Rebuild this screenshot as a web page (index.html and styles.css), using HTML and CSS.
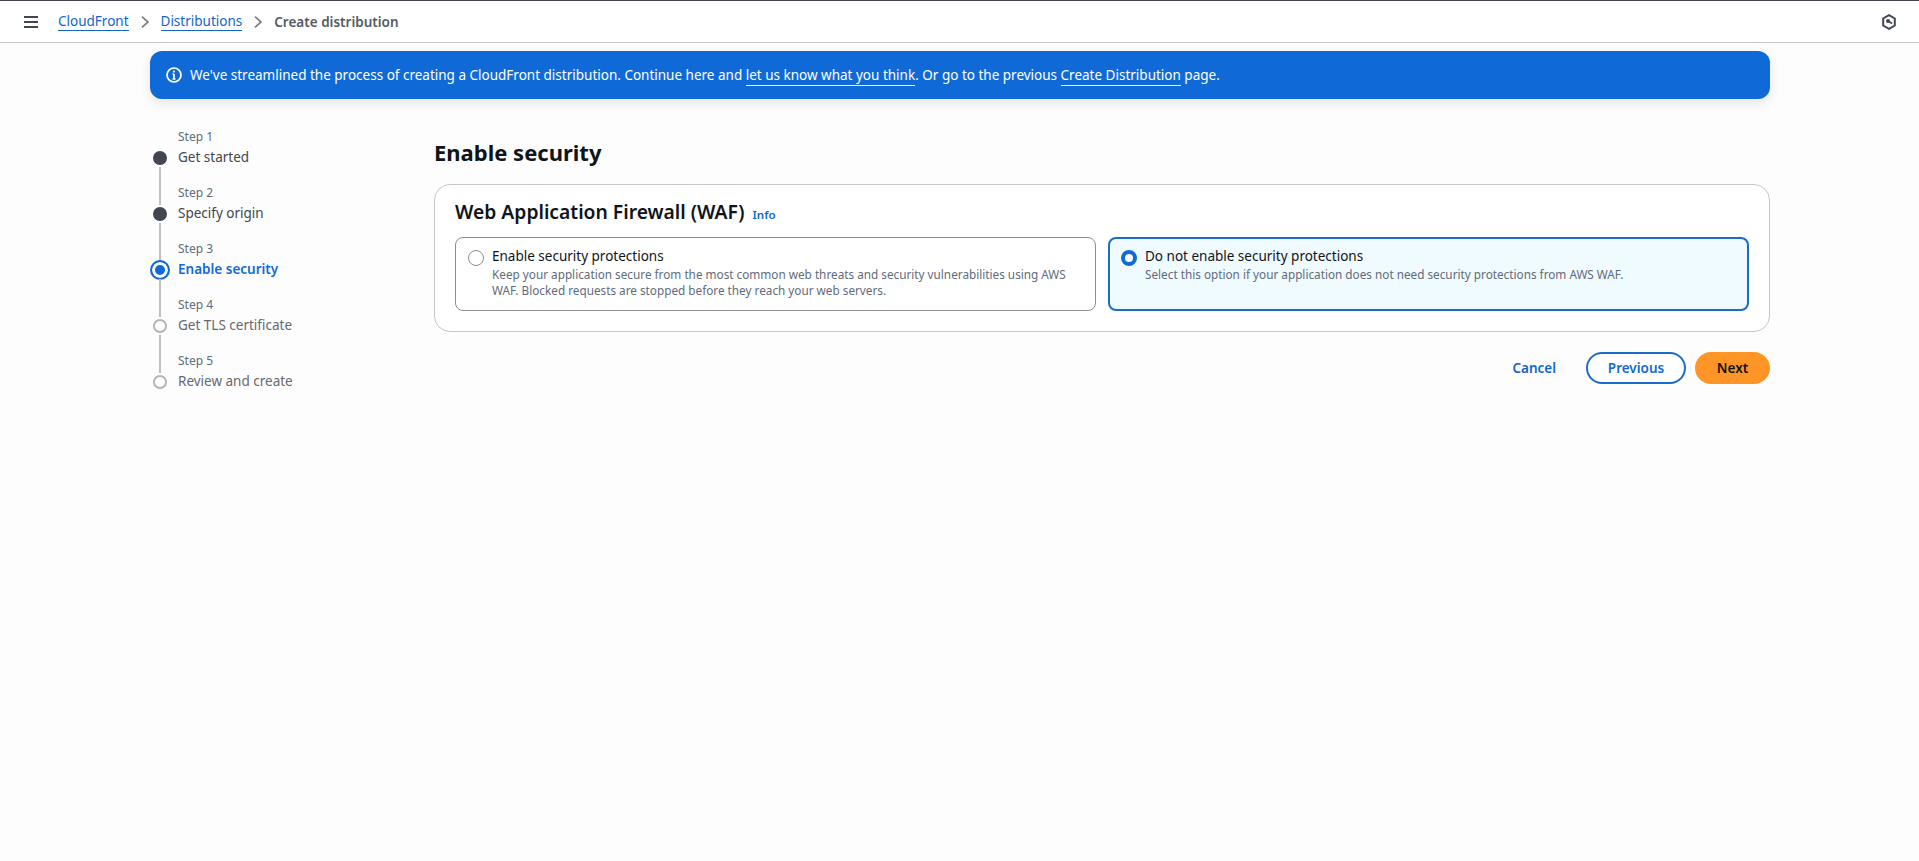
FILE: index.html
```html
<!DOCTYPE html>
<html lang="en">
<head>
<meta charset="utf-8">
<title>Create distribution | CloudFront</title>
<link rel="stylesheet" href="styles.css">
</head>
<body>
<header class="topbar">
  <button class="menu-btn" aria-label="Menu">
    <svg class="icon-menu" viewBox="0 0 14 12"><path d="M0 1h14M0 6h14M0 11h14"/></svg>
  </button>
  <nav class="crumbs">
    <a class="crumb-link" href="#">CloudFront</a>
    <svg class="crumb-sep" viewBox="0 0 8 12"><path d="M1 .7 7 6l-6 5.300"/></svg>
    <a class="crumb-link" href="#">Distributions</a>
    <svg class="crumb-sep" viewBox="0 0 8 12"><path d="M1 .7 7 6l-6 5.300"/></svg>
    <span class="crumb-current">Create distribution</span>
  </nav>
  <svg class="icon-hex" viewBox="0 0 16 16"><path class="hex-outline" d="M8 1.200 13.800 4.500v7L8 14.800 2.200 11.500v-7z"/><circle class="hex-dot" cx="7" cy="7" r="2"/><path class="hex-line" d="M7 7l4 2.500"/></svg>
</header>

<main class="page">
  <div class="banner">
    <svg class="icon-info" viewBox="0 0 16 16"><circle cx="8" cy="8" r="7"/><path d="M8 7v5M6.500 12h3M6.500 7H8"/><path d="M8 3.600v1.800"/></svg>
    <p class="banner-text">We've streamlined the process of creating a CloudFront distribution. Continue here and <a href="#">let us know what you think</a>. Or go to the previous <a href="#">Create Distribution</a> page.</p>
  </div>

  <div class="wizard">
    <ol class="steps">
      <li class="step step-first step-done">
        <div class="rail"><span class="line-top"></span><span class="dot"></span><span class="line-bottom"></span></div>
        <div class="step-text"><small>Step 1</small><strong>Get started</strong></div>
      </li>
      <li class="step step-done">
        <div class="rail"><span class="line-top"></span><span class="dot"></span><span class="line-bottom"></span></div>
        <div class="step-text"><small>Step 2</small><strong>Specify origin</strong></div>
      </li>
      <li class="step step-active">
        <div class="rail"><span class="line-top"></span><span class="dot"></span><span class="line-bottom"></span></div>
        <div class="step-text"><small>Step 3</small><strong>Enable security</strong></div>
      </li>
      <li class="step">
        <div class="rail"><span class="line-top"></span><span class="dot"></span><span class="line-bottom"></span></div>
        <div class="step-text"><small>Step 4</small><strong>Get TLS certificate</strong></div>
      </li>
      <li class="step step-last">
        <div class="rail"><span class="line-top"></span><span class="dot"></span><span class="line-bottom"></span></div>
        <div class="step-text"><small>Step 5</small><strong>Review and create</strong></div>
      </li>
    </ol>

    <section class="content">
      <h1 class="title">Enable security</h1>
      <div class="card">
        <div class="card-head">
          <h2>Web Application Firewall (WAF)</h2>
          <a class="info" href="#">Info</a>
        </div>
        <div class="options">
          <label class="option">
            <span class="radio"></span>
            <span class="option-text">
              <span class="option-title">Enable security protections</span>
              <span class="option-desc">Keep your application secure from the most common web threats and security vulnerabilities using AWS WAF. Blocked requests are stopped before they reach your web servers.</span>
            </span>
          </label>
          <label class="option option-selected">
            <span class="radio"></span>
            <span class="option-text">
              <span class="option-title">Do not enable security protections</span>
              <span class="option-desc">Select this option if your application does not need security protections from AWS WAF.</span>
            </span>
          </label>
        </div>
      </div>
      <div class="actions">
        <a class="btn-link" href="#">Cancel</a>
        <button class="btn btn-normal">Previous</button>
        <button class="btn btn-primary">Next</button>
      </div>
    </section>
  </div>
</main>
</body>
</html>
```

FILE: styles.css
```css
* { box-sizing: border-box; }
html, body { height: 100%; }
body {
  margin: 0;
  background: #fdfdfd;
  color: #0f141a;
  font-family: "Noto Sans", "Open Sans", sans-serif;
  font-size: 13.5px;
  line-height: 20px;
}
a { color: #1066cc; }

.topbar {
  height: 43px;
  display: flex;
  align-items: center;
  padding-left: 24px;
  padding-right: 22px;
  background: #fff;
  border-top: 1px solid #424650;
  border-bottom: 1px solid #c6c6cd;
}
.menu-btn { display: flex; padding: 0; border: 0; background: none; }
.icon-menu { width: 14px; height: 12px; fill: none; stroke: #424650; stroke-width: 2; }
.crumbs { display: flex; align-items: center; margin-left: 20px; flex: 1; }
.crumb-link { text-decoration: none; border-bottom: 1px solid #1066cc; line-height: 17px; margin-top: 1px; }
.crumb-sep { width: 8px; height: 12px; margin: 0 12px; fill: none; stroke: #7d8088; stroke-width: 1.800; }
.crumb-current { font-weight: 600; color: #545b64; }
.icon-hex { width: 16px; height: 16px; }
.hex-outline { fill: none; stroke: #424650; stroke-width: 2; }
.hex-dot { fill: #424650; }
.hex-line { stroke: #424650; stroke-width: 1.800; fill: none; }

.page { padding: 8px 149px 0 150px; }

.banner {
  height: 48px;
  display: flex;
  align-items: center;
  gap: 8px;
  padding-left: 16px;
  background: #0f6ad8;
  color: #fff;
  border-radius: 12px;
  box-shadow: 0 4px 12px rgba(0, 7, 22, 0.1);
}
.icon-info { width: 16px; height: 16px; fill: none; stroke: #fff; stroke-width: 1.700; flex: none; }
.banner-text { margin: 0; }
.banner-text a { color: #fff; text-decoration: none; border-bottom: 1px solid #fff; padding-bottom: 1px; }

.wizard { display: flex; margin-top: 30px; }
.steps { list-style: none; margin: 0; padding: 0; width: 284px; flex: none; }
.step { display: flex; gap: 8px; height: 56px; }
.rail { width: 20px; display: flex; flex-direction: column; align-items: center; }
.line-top { width: 2px; height: 20px; background: #c0c0c6; flex: none; }
.line-bottom { width: 2px; flex: 1; background: #c0c0c6; }
.dot {
  width: 14px;
  height: 14px;
  margin: 2px 0;
  border-radius: 50%;
  border: 2px solid #b4b4bb;
  background: #fff;
  flex: none;
}
.step-first .line-top { visibility: hidden; }
.step-last .line-bottom { visibility: hidden; }
.step-done .dot { background: #424650; border-color: #424650; }
.step-active .dot {
  width: 20px;
  height: 20px;
  margin: -1px 0;
  border-color: #0f6ad8;
  background: #0f6ad8;
  box-shadow: inset 0 0 0 3px #fff;
}
.step-text { display: flex; flex-direction: column; }
.step-text small { font-size: 12px; line-height: 16px; color: #5f6b7a; }
.step-text strong { font-weight: 400; line-height: 20px; margin-top: 2px; color: #656871; }
.step-done .step-text strong { color: #424650; }
.step-active .step-text strong { color: #0f6ad8; font-weight: 600; }

.content { flex: 1; min-width: 0; }
.title { margin: 8px 0 17px; font-size: 22px; line-height: 30px; font-weight: 700; }
.card {
  border: 1px solid #c6c6cd;
  border-radius: 16px;
  background: #fff;
  padding: 15px 20px 20px;
}
.card-head { display: flex; align-items: baseline; gap: 8px; height: 24px; margin-bottom: 13px; }
.card-head h2 { margin: 0; font-size: 19.300px; line-height: 24px; font-weight: 600; }
.info { font-size: 11.500px; font-weight: 600; text-decoration: none; }
.options { display: grid; grid-template-columns: 1fr 1fr; gap: 12px; }
.option {
  display: flex;
  gap: 8px;
  height: 74px;
  padding: 9px 12px 12px;
  border: 1px solid #8c8c94;
  border-radius: 8px;
  background: #fff;
}
.option-selected { padding: 8px 11px 11px; border: 2px solid #1a6cc9; background: #f0fbff; }
.radio {
  width: 16px;
  height: 16px;
  margin-top: 3px;
  flex: none;
  border-radius: 50%;
  border: 1px solid #8c8c94;
  background: #fff;
}
.option-selected .radio { border: 4px solid #0f6ad8; }
.option-text { display: flex; flex-direction: column; }
.option-title { line-height: 19px; }
.option-desc { font-size: 11.750px; line-height: 16px; color: #5f6b7a; }

.actions { display: flex; align-items: center; justify-content: flex-end; margin-top: 20px; }
.btn-link { font-weight: 600; text-decoration: none; margin-right: 30px; }
.btn {
  height: 32px;
  border-radius: 16px;
  font: inherit;
  font-weight: 600;
  padding: 0;
}
.btn-normal { width: 100px; margin-right: 9px; border: 2px solid #1a6cc9; background: #fff; color: #0f6ad8; }
.btn-primary { width: 75px; border: 0; background: #ff9526; color: #0f141a; }
```
